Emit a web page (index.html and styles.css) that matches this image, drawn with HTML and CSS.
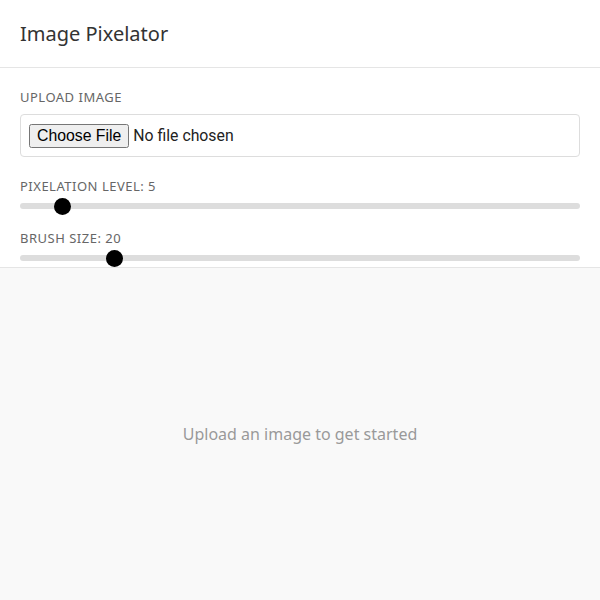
FILE: index.html
```html
<!DOCTYPE html>
<html>
<head>
<meta charset="utf-8">
<link rel="stylesheet" href="styles.css">
</head>
<body>
<div class="app">
  <header class="header">Image Pixelator</header>
  <section class="controls">
    <div class="group">
      <label class="label">Upload Image</label>
      <div class="file-box"><input type="file" class="file"></div>
    </div>
    <div class="group">
      <label class="label">Pixelation Level: 5</label>
      <input type="range" class="range" min="2" max="50" value="5">
    </div>
    <div class="group last">
      <label class="label">Brush Size: 20</label>
      <input type="range" class="range" min="5" max="100" value="20">
    </div>
  </section>
  <main class="canvas-area">
    <p class="placeholder">Upload an image to get started</p>
  </main>
</div>
</body>
</html>
```
FILE: styles.css
```css
* { box-sizing: border-box; }
html, body { margin: 0; height: 100%; }
body { font-family: "Noto Sans", "Open Sans", sans-serif; color: #333; background: #fff; }
.app { display: flex; flex-direction: column; height: 100vh; }
.header {
  padding: 20px;
  font-size: 20px;
  line-height: 27px;
  color: #333;
  border-bottom: 1px solid #e5e5e5;
}
.controls {
  padding: 20px 20px 6px;
  border-bottom: 1px solid #e5e5e5;
  display: flex;
  flex-direction: column;
  gap: 20px;
}
.group { display: flex; flex-direction: column; gap: 8px; }
.label {
  font-size: 13px;
  line-height: 18px;
  color: #666;
  text-transform: uppercase;
  letter-spacing: 0.5px;
}
.file-box {
  border: 1px solid #ddd;
  border-radius: 4px;
  padding: 8px;
  height: 43px;
  display: flex;
  align-items: center;
}
.file { font-family: Roboto, "Liberation Sans", sans-serif; font-size: 15.8px; color: #222; }
.range {
  -webkit-appearance: none;
  appearance: none;
  width: 100%;
  height: 6px;
  margin: 0;
  background: #ddd;
  border-radius: 3px;
  outline: none;
}
.range::-webkit-slider-thumb {
  -webkit-appearance: none;
  appearance: none;
  width: 17px;
  height: 17px;
  border-radius: 50%;
  background: #000;
  cursor: pointer;
}
.canvas-area {
  flex: 1;
  background: #f9f9f9;
  display: flex;
  align-items: center;
  justify-content: center;
}
.placeholder { margin: 0; font-size: 16px; color: #999; }
```
